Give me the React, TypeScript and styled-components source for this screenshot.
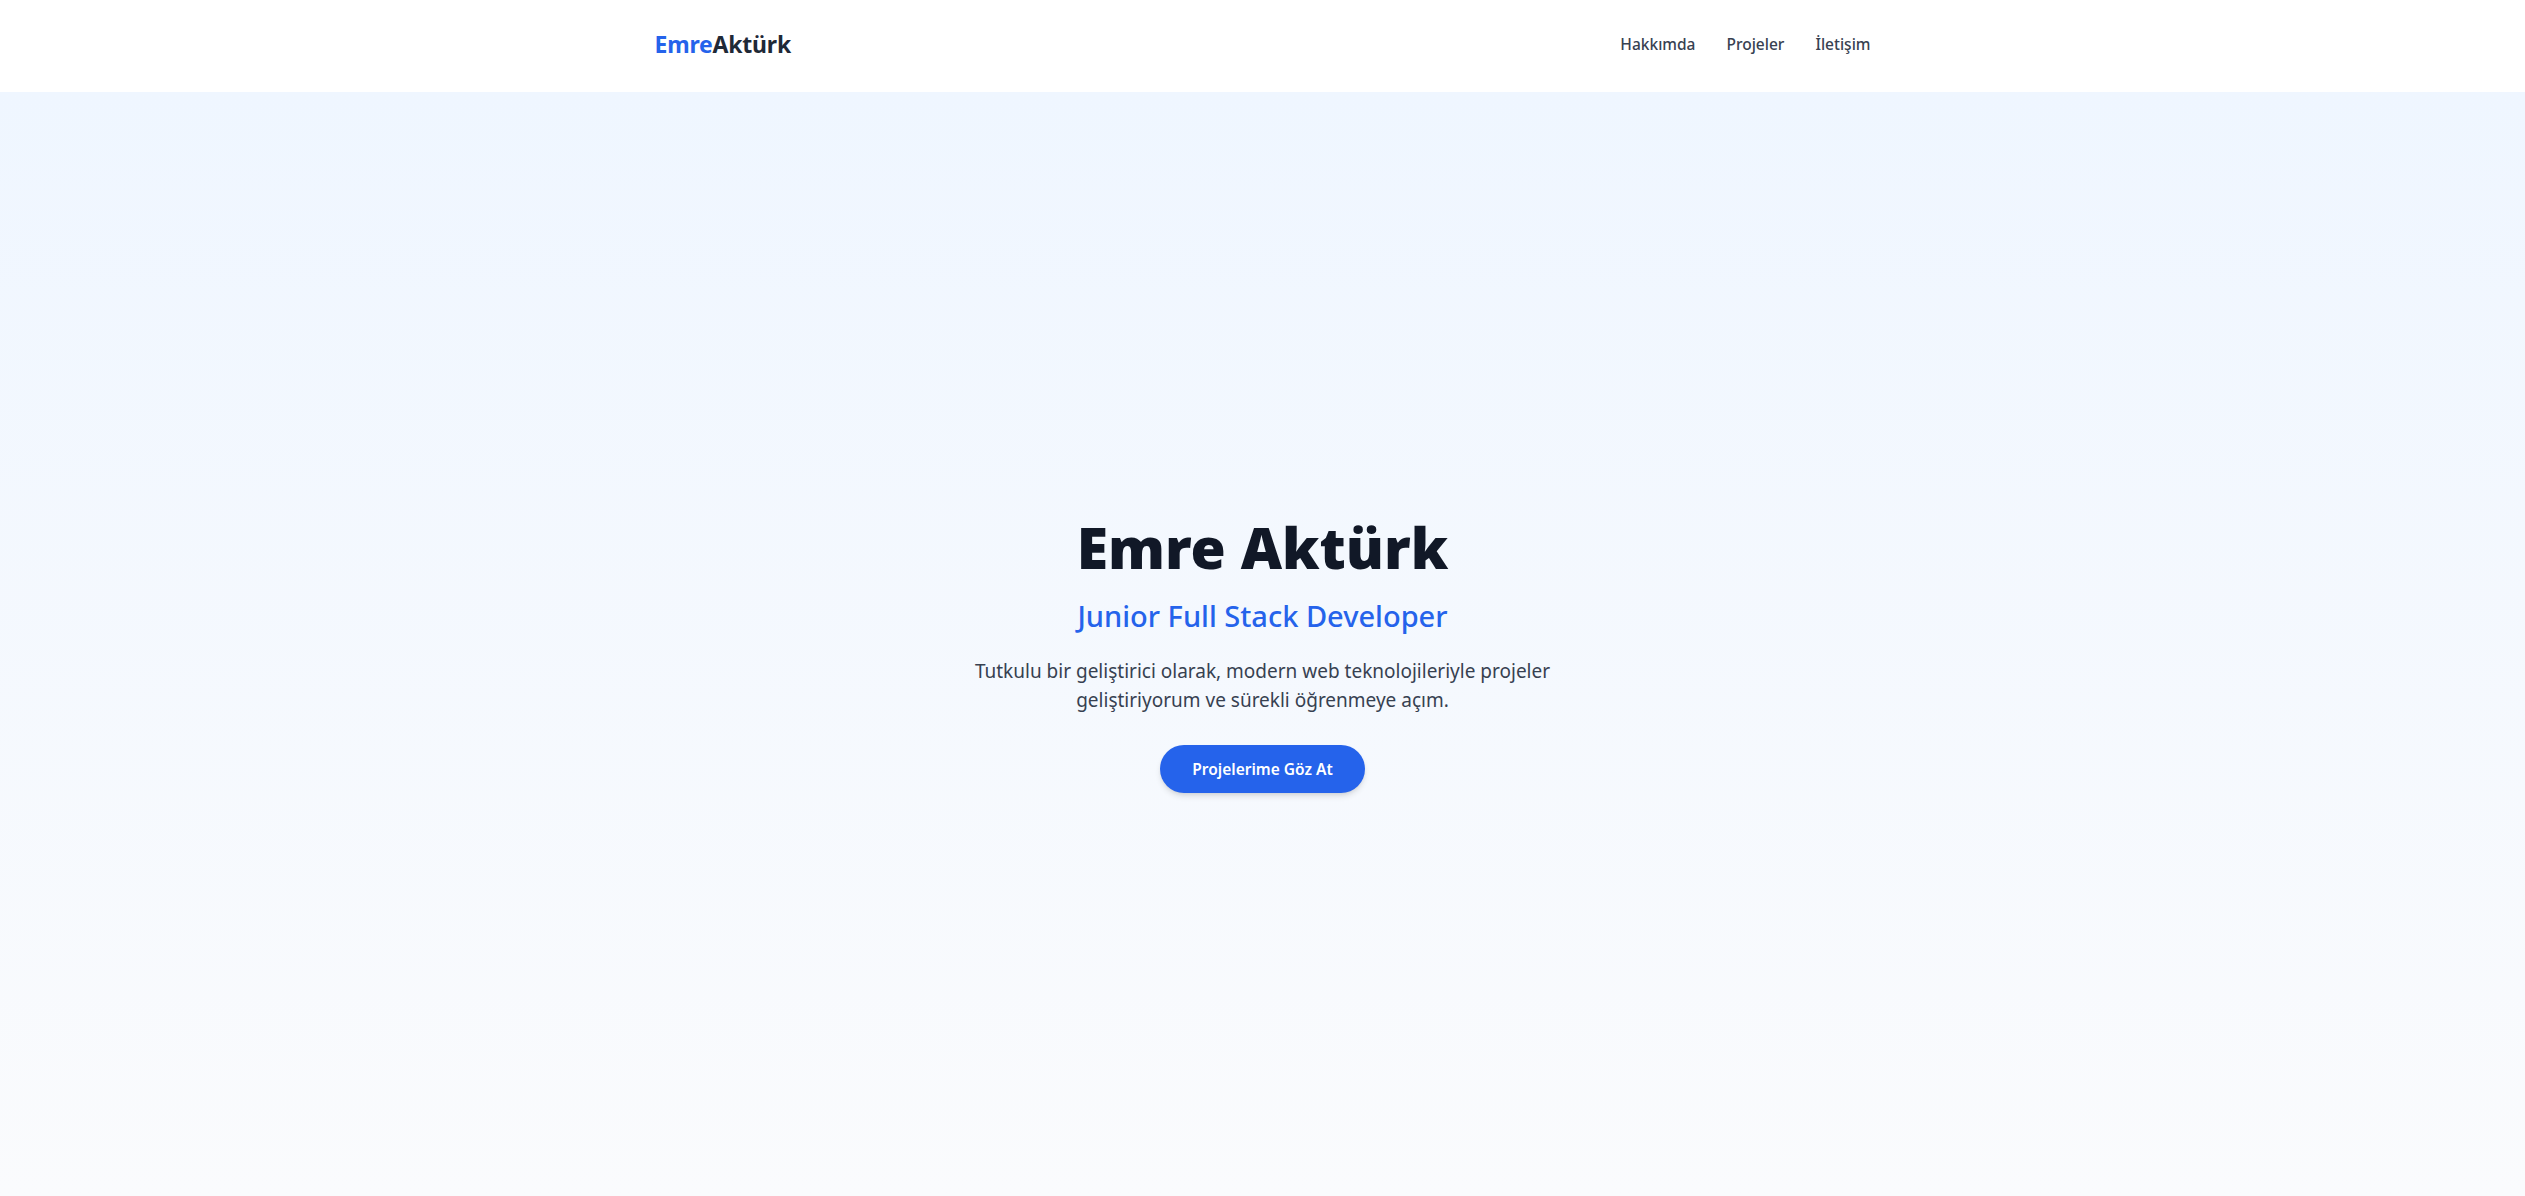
import React from "react";
import styled, { createGlobalStyle } from "styled-components";

const GlobalStyle = createGlobalStyle`
  * { box-sizing: border-box; }
  html, body { margin: 0; padding: 0; }
  body {
    font-family: "Noto Sans", "Open Sans", "Liberation Sans", sans-serif;
    background: #ffffff;
    color: #111827;
  }
`;

const Page = styled.div`
  display: flex;
  flex-direction: column;
  min-height: 100vh;
`;

const Header = styled.header`
  height: 92px;
  background: #ffffff;
  display: flex;
  justify-content: center;
`;

const HeaderInner = styled.div`
  width: 1216px;
  display: flex;
  align-items: center;
  justify-content: space-between;
  padding-bottom: 4px;
`;

const Logo = styled.a`
  font-size: 23px;
  font-weight: 700;
  color: #1f2937;
  text-decoration: none;
  letter-spacing: -0.2px;
`;

const LogoAccent = styled.span`
  color: #2563eb;
`;

const Nav = styled.nav`
  display: flex;
  gap: 31px;
`;

const NavLink = styled.a`
  font-size: 15.5px;
  font-weight: 500;
  color: #374151;
  text-decoration: none;
`;

const Hero = styled.section`
  flex: 1;
  background: linear-gradient(180deg, #eff6ff 0%, #fafbfd 100%);
  display: flex;
  flex-direction: column;
  align-items: center;
  justify-content: center;
  text-align: center;
  padding-top: 14px;
`;

const Title = styled.h1`
  margin: 0;
  font-size: 57px;
  line-height: 75px;
  font-weight: 900;
  color: #111827;
`;

const Subtitle = styled.h2`
  margin: 11px 0 0;
  font-size: 29px;
  line-height: 40px;
  font-weight: 500;
  color: #2563eb;
`;

const Description = styled.p`
  margin: 21px 0 0;
  max-width: 580px;
  font-size: 19px;
  line-height: 29px;
  color: #374151;
`;

const CTA = styled.a`
  margin-top: 30px;
  display: inline-flex;
  align-items: center;
  justify-content: center;
  height: 48px;
  padding: 0 32px;
  border-radius: 9999px;
  background: #2563eb;
  color: #ffffff;
  font-size: 15.5px;
  font-weight: 600;
  text-decoration: none;
  box-shadow: 0 4px 6px -1px rgba(0, 0, 0, 0.12), 0 2px 4px -2px rgba(0, 0, 0, 0.1);
`;

export default function App() {
  return (
    <>
      <GlobalStyle />
      <Page>
        <Header>
          <HeaderInner>
            <Logo href="#">
              <LogoAccent>Emre</LogoAccent>Aktürk
            </Logo>
            <Nav>
              <NavLink href="#about">Hakkımda</NavLink>
              <NavLink href="#projects">Projeler</NavLink>
              <NavLink href="#contact">İletişim</NavLink>
            </Nav>
          </HeaderInner>
        </Header>
        <Hero>
          <Title>Emre Aktürk</Title>
          <Subtitle>Junior Full Stack Developer</Subtitle>
          <Description>
            Tutkulu bir geliştirici olarak, modern web teknolojileriyle projeler geliştiriyorum ve sürekli öğrenmeye açım.
          </Description>
          <CTA href="#projects">Projelerime Göz At</CTA>
        </Hero>
      </Page>
    </>
  );
}
